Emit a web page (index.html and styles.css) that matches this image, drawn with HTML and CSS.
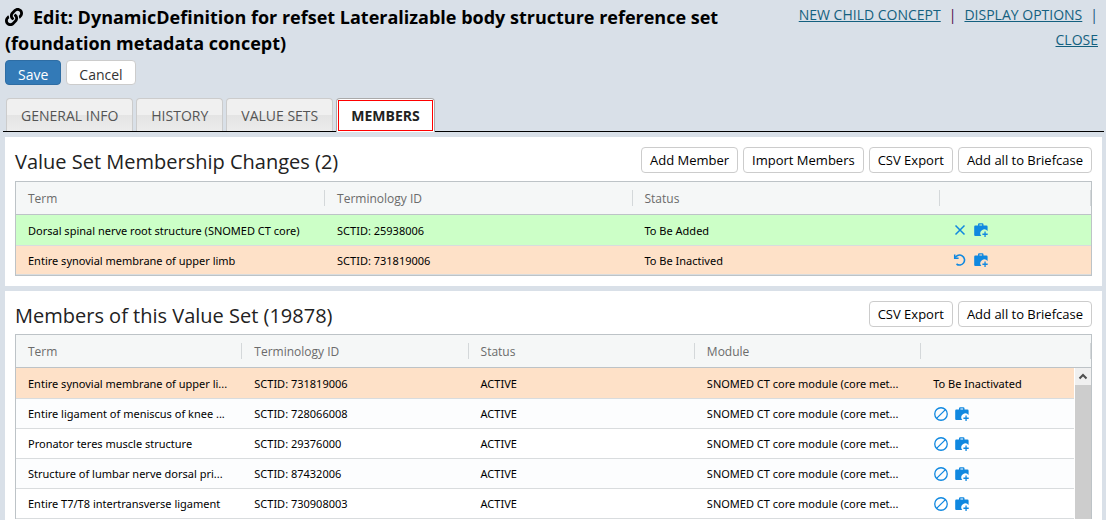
FILE: index.html
```html
<!DOCTYPE html>
<html lang="en">
<head>
<meta charset="utf-8">
<meta name="viewport" content="width=device-width, initial-scale=1">
<title>Edit: DynamicDefinition</title>
<link rel="stylesheet" href="styles.css">
</head>
<body>
<svg class="sprite" width="0" height="0" aria-hidden="true">
  <symbol id="i-link" viewBox="0 0 512 512"><path d="M326.612 185.391c59.747 59.809 58.927 155.698.36 214.59-.11.12-.24.25-.36.37l-67.2 67.2c-59.27 59.27-155.699 59.262-214.96 0-59.27-59.26-59.27-155.7 0-214.96l37.106-37.106c9.84-9.84 26.786-3.3 27.294 10.606.648 17.722 3.826 35.527 9.69 52.721 1.986 5.822.567 12.262-3.783 16.612l-13.087 13.087c-28.026 28.026-28.905 73.66-1.155 101.96 28.024 28.579 74.086 28.749 102.325.51l67.2-67.19c28.191-28.191 28.073-73.757 0-101.83-3.701-3.694-7.429-6.564-10.341-8.569a16.037 16.037 0 0 1-6.947-12.606c-.396-10.567 3.348-21.456 11.698-29.806l21.054-21.055c5.521-5.521 14.182-6.199 20.584-1.731a152.482 152.482 0 0 1 20.522 17.197zM467.547 44.449c-59.261-59.262-155.69-59.27-214.96 0l-67.2 67.2c-.12.12-.25.25-.36.37-58.566 58.892-59.387 154.781.36 214.59a152.454 152.454 0 0 0 20.521 17.196c6.402 4.468 15.064 3.789 20.584-1.731l21.054-21.055c8.35-8.35 12.094-19.239 11.698-29.806a16.037 16.037 0 0 0-6.947-12.606c-2.912-2.005-6.64-4.875-10.341-8.569-28.073-28.073-28.191-73.639 0-101.83l67.2-67.19c28.239-28.239 74.3-28.069 102.325.51 27.75 28.3 26.872 73.934-1.155 101.96l-13.087 13.087c-4.35 4.35-5.769 10.79-3.783 16.612 5.864 17.194 9.042 34.999 9.69 52.721.509 13.906 17.454 20.446 27.294 10.606l37.106-37.106c59.271-59.259 59.271-155.699.001-214.959z"/></symbol>
  <symbol id="i-case" viewBox="0 0 14 14"><path fill-rule="evenodd" d="M4 2.6V1.6Q4 .3 5.300.3H8.200Q9.500.3 9.500 1.600V2.600H12.500Q13.600 2.600 13.600 3.700V7.900A4 4 0 0 0 7.300 13H1.200Q.2 13 .2 12V3.700Q.2 2.600 1.300 2.600ZM5.400 2.600H8.100V1.600H5.400Z"/><path d="M10.400 8.600h1.300v2h2v1.300h-2v2h-1.300v-2h-2v-1.300h2Z"/></symbol>
  <symbol id="i-cross" viewBox="0 0 14 14"><path d="M2.500 2.500 11.500 11.500M11.500 2.500 2.500 11.500" fill="none" stroke="currentColor" stroke-width="1.500"/></symbol>
  <symbol id="i-undo" viewBox="0 0 14 14"><path d="M2.200 4.500A5 5 0 1 1 3.500 11" fill="none" stroke="currentColor" stroke-width="1.600"/><path d="M1.700 1.500V5.300H5.600" fill="none" stroke="currentColor" stroke-width="1.500"/></symbol>
  <symbol id="i-ban" viewBox="0 0 14 14"><circle cx="7" cy="7" r="6.250" fill="none" stroke="currentColor" stroke-width="1.300"/><path d="M11.400 2.600 2.600 11.400" fill="none" stroke="currentColor" stroke-width="1.300"/></symbol>
</svg>

<header class="page-head">
  <div class="title-block">
    <h1><svg class="link-icon" aria-hidden="true"><use href="#i-link"/></svg>Edit: DynamicDefinition for refset Lateralizable body structure reference set (foundation metadata concept)</h1>
    <div class="form-actions">
      <button class="btn-form btn-save" type="button">Save</button>
      <button class="btn-form" type="button">Cancel</button>
    </div>
  </div>
  <nav class="head-links">
    <a href="#new">NEW CHILD CONCEPT</a><span class="bar bar-plum">|</span><a href="#display">DISPLAY OPTIONS</a><span class="bar">|</span> <a href="#close">CLOSE</a>
  </nav>
</header>

<div class="tabs" role="tablist">
  <button class="tab" role="tab" type="button">GENERAL INFO</button>
  <button class="tab" role="tab" type="button">HISTORY</button>
  <button class="tab" role="tab" type="button">VALUE SETS</button>
  <button class="tab tab-active" role="tab" type="button" aria-selected="true"><span>MEMBERS</span></button>
</div>

<main class="panels">
  <section class="panel">
    <div class="panel-head">
      <h2>Value Set Membership Changes (2)</h2>
      <div class="actions">
        <button class="btn" type="button">Add Member</button>
        <button class="btn" type="button">Import Members</button>
        <button class="btn" type="button">CSV Export</button>
        <button class="btn" type="button">Add all to Briefcase</button>
      </div>
    </div>
    <div class="grid">
      <table class="changes">
        <colgroup><col class="c-third-first"><col class="c-third"><col class="c-third"><col></colgroup>
        <thead><tr><th>Term</th><th>Terminology ID</th><th>Status</th><th aria-label="Actions"></th></tr></thead>
        <tbody>
          <tr class="row-added"><td>Dorsal spinal nerve root structure (SNOMED CT core)</td><td>SCTID: 25938006</td><td>To Be Added</td>
            <td><div class="icons"><button class="icon" type="button" aria-label="Remove"><svg><use href="#i-cross"/></svg></button><button class="icon" type="button" aria-label="Add to briefcase"><svg><use href="#i-case"/></svg></button></div></td></tr>
          <tr class="row-inactive"><td>Entire synovial membrane of upper limb</td><td>SCTID: 731819006</td><td>To Be Inactived</td>
            <td><div class="icons"><button class="icon" type="button" aria-label="Undo"><svg><use href="#i-undo"/></svg></button><button class="icon" type="button" aria-label="Add to briefcase"><svg><use href="#i-case"/></svg></button></div></td></tr>
        </tbody>
      </table>
    </div>
  </section>

  <section class="panel">
    <div class="panel-head">
      <h2>Members of this Value Set (19878)</h2>
      <div class="actions">
        <button class="btn" type="button">CSV Export</button>
        <button class="btn" type="button">Add all to Briefcase</button>
      </div>
    </div>
    <div class="grid">
      <table class="members">
        <colgroup><col class="c-fifth"><col class="c-fifth"><col class="c-fifth"><col class="c-fifth"><col><col class="c-scroll"></colgroup>
        <thead><tr><th>Term</th><th>Terminology ID</th><th>Status</th><th>Module</th><th colspan="2" aria-label="Actions"></th></tr></thead>
        <tbody>
          <tr class="row-inactive"><td>Entire synovial membrane of upper li...</td><td>SCTID: 731819006</td><td>ACTIVE</td><td>SNOMED CT core module (core met...</td><td>To Be Inactivated</td>
            <td class="scroll" rowspan="5"><div class="scroll-track"><button class="scroll-up" type="button" aria-label="Scroll up"><svg viewBox="0 0 16 17"><path d="M4.500 10.500 8 7 11.500 10.500" fill="none" stroke="#505050" stroke-width="2"/></svg></button></div></td></tr>
          <tr class="row-alt"><td>Entire ligament of meniscus of knee ...</td><td>SCTID: 728066008</td><td>ACTIVE</td><td>SNOMED CT core module (core met...</td>
            <td><div class="icons"><button class="icon" type="button" aria-label="Inactivate"><svg><use href="#i-ban"/></svg></button><button class="icon" type="button" aria-label="Add to briefcase"><svg><use href="#i-case"/></svg></button></div></td></tr>
          <tr><td>Pronator teres muscle structure</td><td>SCTID: 29376000</td><td>ACTIVE</td><td>SNOMED CT core module (core met...</td>
            <td><div class="icons"><button class="icon" type="button" aria-label="Inactivate"><svg><use href="#i-ban"/></svg></button><button class="icon" type="button" aria-label="Add to briefcase"><svg><use href="#i-case"/></svg></button></div></td></tr>
          <tr class="row-alt"><td>Structure of lumbar nerve dorsal pri...</td><td>SCTID: 87432006</td><td>ACTIVE</td><td>SNOMED CT core module (core met...</td>
            <td><div class="icons"><button class="icon" type="button" aria-label="Inactivate"><svg><use href="#i-ban"/></svg></button><button class="icon" type="button" aria-label="Add to briefcase"><svg><use href="#i-case"/></svg></button></div></td></tr>
          <tr><td>Entire T7/T8 intertransverse ligament</td><td>SCTID: 730908003</td><td>ACTIVE</td><td>SNOMED CT core module (core met...</td>
            <td><div class="icons"><button class="icon" type="button" aria-label="Inactivate"><svg><use href="#i-ban"/></svg></button><button class="icon" type="button" aria-label="Add to briefcase"><svg><use href="#i-case"/></svg></button></div></td></tr>
        </tbody>
      </table>
    </div>
  </section>
</main>
</body>
</html>
```
FILE: styles.css
```css
* { box-sizing: border-box; }

body {
  margin: 0;
  background: #d9e0e8;
  color: #222;
  font-family: "Open Sans", "Noto Sans", sans-serif;
  font-size: 14px;
}

button { font: inherit; cursor: pointer; }
h1, h2 { margin: 0; }
.sprite { display: block; position: absolute; }

.page-head {
  display: flex;
  justify-content: space-between;
  padding: 2px 8px 0 5px;
}

.title-block { flex: 0 0 67%; padding-top: 2px; }

h1 {
  color: #000;
  font-size: 18px;
  font-weight: 700;
  line-height: 26px;
}

.link-icon {
  width: 18px;
  height: 18px;
  margin-right: 10px;
  vertical-align: -2px;
}

.form-actions { display: flex; gap: 5px; margin-top: 4px; }

.btn-form {
  height: 25px;
  padding: 4px 12px 0;
  border: 1px solid #ccc;
  border-radius: 4px;
  background: #fff;
  color: #333;
  line-height: 20px;
}

.btn-save { border-color: #2e6da4; background: #337ab7; color: #fff; }

.head-links {
  flex: 0 1 320px;
  text-align: right;
  line-height: 25px;
  color: #14507c;
}

.head-links a { color: #14607f; }
.bar { padding: 0 8px; }
.bar:last-of-type { padding-right: 0; }
.bar-plum { color: #4b0a4b; }

.tabs {
  display: flex;
  gap: 3px;
  height: 34px;
  margin: 13px 2px 0 3px;
  padding-left: 3px;
  border-bottom: 1px solid #000;
}

.tab {
  height: 33px;
  padding: 0 14px;
  border: 1px solid #ccc;
  border-bottom: 0;
  border-radius: 4px 4px 0 0;
  background: linear-gradient(#f0f0f0 50%, #e4e4e4 50%, #ececec);
  color: #555;
}

.tab-active {
  height: 34px;
  padding: 1px 1px 2px;
  border-color: #aaa;
  background: #fff;
  color: #222;
  font-weight: 700;
}

.tab-active span {
  display: block;
  padding: 0 12px;
  border: 1px solid #f00;
  line-height: 29px;
}

.panels {
  display: flex;
  flex-direction: column;
  gap: 5px;
  margin: 5px 4px 0 5px;
}

.panel { padding: 10px; background: #fff; }
.panel:last-child { padding-bottom: 1px; }

.panel-head {
  display: flex;
  align-items: flex-start;
  justify-content: space-between;
  height: 34px;
}

.panel + .panel .panel-head { height: 33px; }

h2 { font-size: 20px; font-weight: 400; line-height: 30px; }

.actions { display: flex; gap: 5px; }

.btn {
  height: 26px;
  padding: 0 8px;
  border: 1px solid #ccc;
  border-radius: 4px;
  background: #fff;
  color: #000;
  font-size: 13px;
  line-height: 24px;
}

.grid { border: 1px solid #bdc3c7; }
.panel:last-child .grid { border-bottom: 0; }

table {
  width: 100%;
  border-collapse: separate;
  border-spacing: 0;
  table-layout: fixed;
  color: #000;
}

.c-third-first { width: 28.75%; }
.c-third { width: 28.6%; }
.c-fifth { width: 21.05%; }
.c-scroll { width: 17px; }

th, td {
  padding: 0 12px;
  border-bottom: 1px solid #d9dcde;
  text-align: left;
  white-space: nowrap;
  overflow: hidden;
}

td {
  height: 30px;
  font-family: "Noto Sans", "Open Sans", sans-serif;
  font-size: 11px;
}

th {
  height: 33px;
  border-color: #bdc3c7;
  background:
    linear-gradient(#d4d8da, #d4d8da) right center / 1px 16px no-repeat,
    #f5f7f7;
  color: #6b6b6b;
  font-size: 12px;
  font-weight: 400;
}

tbody tr:first-child td:not(.scroll) { height: 31px; }
.changes tbody tr:last-child td { height: 29px; }
.row-added { background: #ccffc7; }
.row-inactive { background: #fee1c8; }
.row-alt { background: #fcfdfe; }

.icons { display: flex; gap: 7px; align-items: center; padding-left: 1px; }

.icon {
  display: flex;
  padding: 0;
  border: 0;
  background: none;
  color: #1088e0;
}

.icon svg { width: 14px; height: 14px; fill: currentColor; }

.scroll { padding: 0 0 0 1px; border: 0; background: #fff; vertical-align: top; }
.scroll-track { height: 151px; background: #cdcdcd; }

.scroll-up {
  display: block;
  width: 100%;
  height: 17px;
  padding: 0;
  border: 0;
  background: #f0f0f0;
}

.scroll-up svg { display: block; width: 16px; height: 17px; }
```
